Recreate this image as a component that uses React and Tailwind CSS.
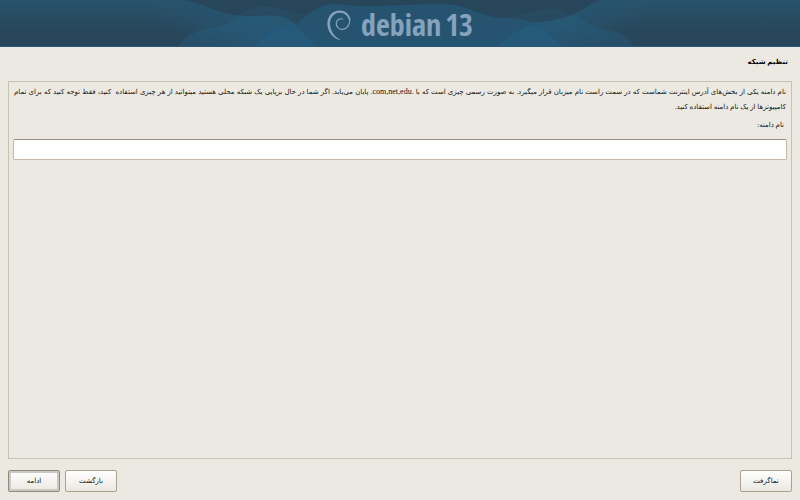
import clsx from "clsx";

function Swirl() {
  return (
    <svg viewBox="0 0 24 31" className="h-[31px] w-6 fill-[#86a3bd]" aria-hidden="true">
      <path d="M23.500 9.500C22.500 3.500 17.500.2 12 .4 5 .8.400 6.500.4 13.500c0 8 5 14.500 12.400 16.800l.2-.6C7 26.500 3 20.500 3 13.500 3.200 7.500 7 3.200 12 2.700c4.800-.5 8.600 2.300 9.800 7z" />
      <path
        className="fill-none stroke-[#86a3bd]"
        strokeWidth="1.200"
        strokeLinecap="round"
        d="M22.800 9c.3 5.500-2.800 10-7 10.300-4.200.3-6.800-2.800-6.500-6 .3-3.200 3-5.200 6.300-4.300"
      />
    </svg>
  );
}

function Waves() {
  return (
    <svg
      viewBox="0 0 800 47"
      preserveAspectRatio="xMidYMid slice"
      className="absolute inset-0 size-full"
      aria-hidden="true"
    >
      <defs>
        <linearGradient id="top" x1="0" y1="0" x2="0" y2="1">
          <stop offset="0" stopColor="#27536b" />
          <stop offset="0.700" stopColor="#28465a" />
        </linearGradient>
        <linearGradient id="left" gradientUnits="userSpaceOnUse" x1="185" y1="42" x2="215" y2="3">
          <stop offset="0" stopColor="#27536d" stopOpacity="0" />
          <stop offset="1" stopColor="#27536d" />
        </linearGradient>
        <linearGradient id="right" gradientUnits="userSpaceOnUse" x1="615" y1="42" x2="585" y2="3">
          <stop offset="0" stopColor="#27536d" stopOpacity="0" />
          <stop offset="1" stopColor="#27536d" />
        </linearGradient>
        <linearGradient id="hump" x1="0" y1="0" x2="0" y2="1">
          <stop offset="0" stopColor="#265a76" stopOpacity="0.800" />
          <stop offset="1" stopColor="#26587a" stopOpacity="0.400" />
        </linearGradient>
        <linearGradient id="back" x1="0" y1="0" x2="0" y2="1">
          <stop offset="0" stopColor="#27536d" stopOpacity="0.500" />
          <stop offset="1" stopColor="#27536d" stopOpacity="0" />
        </linearGradient>
      </defs>
      <path fill="#28465a" d="M0 0h800v47H0z" />
      <path fill="url(#top)" d="M0 0h180c30 4 40 16 65 16h30c20 2 30 20 45 31H0z" />
      <path fill="url(#top)" d="M600 0h200v47H490c20-10 30-25 50-25 30-2 38-12 60-22z" />
      <path fill="url(#left)" d="M120 0h60c30 4 40 16 65 16h30c20 2 30 20 45 31H120z" />
      <path fill="url(#right)" d="M690 0h-90c-22 10-26 20-60 22-20 0-30 15-50 25h200z" />
      <path fill="url(#back)" d="M236 17c14-9 24-11 34-10 16 1 26 8 45 8v20h-79z" />
      <path fill="url(#back)" d="M573 16c-10-6-16-8-26-7-12 1-24 9-50 8v16h76z" />
      <path fill="url(#hump)" d="M178 47c15-23 36-15 55-26 8-5 12-5 22-5 26-1 32-1 44 12 6 8 12 15 20 19z" />
      <path fill="url(#hump)" d="M635 47c-12-19-25-13-44-22-12-6-14-11-22-9-14 5-28 6-42 8-10 5-16 15-32 23z" />
      <path
        fill="#265470"
        d="M255 47c13-18 24-20 40-23 12-6 18-20 42-20 26 4 50 1 102 0 34 0 40 14 64 14 16 0 24 3 34 6 10 6 16 15 27 23z"
      />
      <path fill="#265c80" fillOpacity="0.700" d="M255 47c13-18 24-20 40-23 8 8 14 20 25 23z" />
      <path fill="#265c80" fillOpacity="0.700" d="M495 47c12-8 22-20 42-23 10 6 16 15 27 23z" />
      <path fill="#24577a" d="M0 46h800v1H0z" />
    </svg>
  );
}

function Banner() {
  return (
    <header dir="ltr" className="relative h-[47px] shrink-0 overflow-hidden">
      <Waves />
      <div className="relative flex h-full items-center justify-center pt-1 text-[#86a3bd]">
        <Swirl />
        <p className="ml-2.5 flex gap-1 pb-0.5 font-['Open_Sans_Condensed','Open_Sans',sans-serif] text-[30px] leading-8">
          <span className="font-semibold">debian</span>
          <span className="font-bold">13</span>
        </p>
      </div>
    </header>
  );
}

function Button({ children, focused }) {
  return (
    <button
      type="button"
      className={clsx(
        "h-[22px] w-[52px] rounded-xs border bg-linear-to-b from-white to-[#ebe8e2] leading-4",
        focused
          ? "border-[#8f897c] inset-ring-2 inset-ring-[#c9cac3]"
          : "border-[#aca08e]"
      )}
    >
      {children}
    </button>
  );
}

export default function App() {
  return (
    <div
      dir="rtl"
      lang="fa"
      className="flex min-h-screen flex-col bg-[#ece9e2] font-['Liberation_Serif','DejaVu_Sans',sans-serif] text-[7px] leading-[15px] text-[#111111]"
    >
      <Banner />
      <h1 className="px-3 pt-2 pb-[11px] font-bold text-black">تنظیم شبکه</h1>
      <main className="mx-2 flex-1 border border-[#c9c1b1] px-1 pt-[3px]">
        <p className="px-px text-justify whitespace-pre-wrap">
          {"نام دامنه یکی از بخش‌های آدرس اینترنت شماست که در سمت راست نام میزبان قرار میگیرد. به صورت رسمی چیزی است که با "}
          <span className="text-[8px] leading-3">.com,net,edu.</span>
          {" پایان می‌یابد. اگر شما در حال برپایی یک شبکه محلی هستید میتوانید از هر چیزی استفاده  کنید، فقط توجه کنید که برای تمام کامپیوترها از یک نام دامنه استفاده کنید."}
        </p>
        <label htmlFor="domain" className="mt-[3px] block px-[3px]">
          نام دامنه:
        </label>
        <input
          id="domain"
          type="text"
          dir="ltr"
          className="mt-1.5 block h-[21px] w-full rounded-xs border border-[#c4b9a9] border-t-[#9c9183] bg-white px-1"
        />
      </main>
      <footer dir="ltr" className="flex gap-[5px] px-2 pt-[11px] pb-2">
        <Button focused>ادامه</Button>
        <Button>بازگشت</Button>
        <div className="ml-auto flex">
          <Button>نماگرفت</Button>
        </div>
      </footer>
    </div>
  );
}
